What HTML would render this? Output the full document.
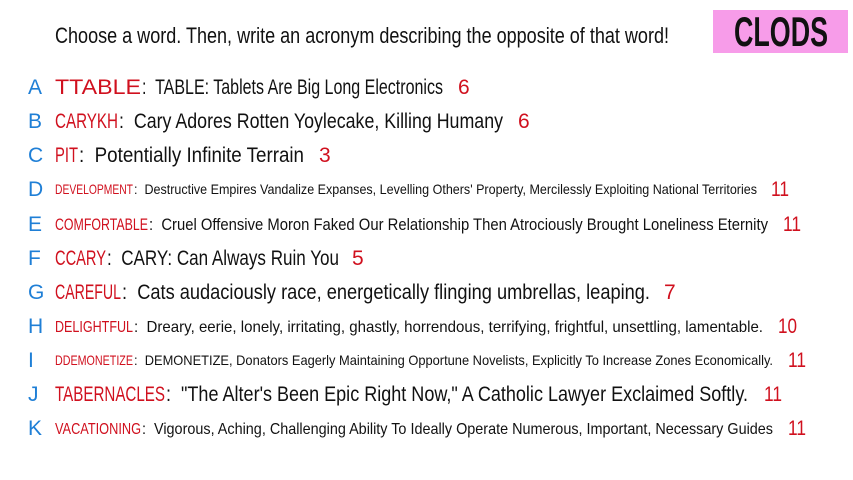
<!DOCTYPE html>
<html><head><meta charset="utf-8"><style>
html,body{margin:0;padding:0;background:#fff;width:853px;height:480px;overflow:hidden}
svg text{font-family:"Liberation Sans",sans-serif;white-space:pre}
.r{fill:#d0101e}.b{fill:#1f7fd6}.k{fill:#111}
</style></head><body>
<svg width="853" height="480" xmlns="http://www.w3.org/2000/svg" xml:space="preserve">
<text class="k" x="55" y="43" font-size="22" textLength="614" lengthAdjust="spacingAndGlyphs">Choose a word. Then, write an acronym describing the opposite of that word!</text>
<rect x="713" y="10" width="135" height="43" fill="#f79ce9"/>
<text class="k" x="734" y="46" font-size="42" font-weight="bold" textLength="94" lengthAdjust="spacingAndGlyphs">CLODS</text>

<g font-size="21">
<text class="b" x="28" y="94">A</text>
<text class="r" x="55" y="94" textLength="86" lengthAdjust="spacingAndGlyphs">TTABLE</text>
<text class="k" x="142" y="94" textLength="301" lengthAdjust="spacingAndGlyphs">:  TABLE: Tablets Are Big Long Electronics</text>
<text class="r" x="458" y="94">6</text>

<text class="b" x="28" y="128">B</text>
<text class="r" x="55" y="128" textLength="63" lengthAdjust="spacingAndGlyphs">CARYKH</text>
<text class="k" x="119" y="128" textLength="384" lengthAdjust="spacingAndGlyphs">:  Cary Adores Rotten Yoylecake, Killing Humany</text>
<text class="r" x="518" y="128">6</text>

<text class="b" x="28" y="162">C</text>
<text class="r" x="55" y="162" textLength="23" lengthAdjust="spacingAndGlyphs">PIT</text>
<text class="k" x="79" y="162" textLength="225" lengthAdjust="spacingAndGlyphs">:  Potentially Infinite Terrain</text>
<text class="r" x="319" y="162">3</text>

<text class="b" x="28" y="196">D</text>
<text class="r" x="55" y="194" font-size="14" textLength="78" lengthAdjust="spacingAndGlyphs">DEVELOPMENT</text>
<text class="k" x="134" y="194" font-size="14" textLength="623" lengthAdjust="spacingAndGlyphs">:  Destructive Empires Vandalize Expanses, Levelling Others' Property, Mercilessly Exploiting National Territories</text>
<text class="r" x="771" y="196" textLength="18" lengthAdjust="spacingAndGlyphs">11</text>

<text class="b" x="28" y="231">E</text>
<text class="r" x="55" y="230" font-size="17" textLength="93" lengthAdjust="spacingAndGlyphs">COMFORTABLE</text>
<text class="k" x="149" y="230" font-size="17" textLength="619" lengthAdjust="spacingAndGlyphs">:  Cruel Offensive Moron Faked Our Relationship Then Atrociously Brought Loneliness Eternity</text>
<text class="r" x="783" y="231" textLength="18" lengthAdjust="spacingAndGlyphs">11</text>

<text class="b" x="28" y="265">F</text>
<text class="r" x="55" y="265" textLength="51" lengthAdjust="spacingAndGlyphs">CCARY</text>
<text class="k" x="107" y="265" textLength="232" lengthAdjust="spacingAndGlyphs">:  CARY: Can Always Ruin You</text>
<text class="r" x="352" y="265">5</text>

<text class="b" x="28" y="299">G</text>
<text class="r" x="55" y="299" textLength="66" lengthAdjust="spacingAndGlyphs">CAREFUL</text>
<text class="k" x="122" y="299" textLength="528" lengthAdjust="spacingAndGlyphs">:  Cats audaciously race, energetically flinging umbrellas, leaping.</text>
<text class="r" x="664" y="299">7</text>

<text class="b" x="28" y="333">H</text>
<text class="r" x="55" y="332" font-size="16" textLength="78" lengthAdjust="spacingAndGlyphs">DELIGHTFUL</text>
<text class="k" x="134" y="332" font-size="16" textLength="629" lengthAdjust="spacingAndGlyphs">:  Dreary, eerie, lonely, irritating, ghastly, horrendous, terrifying, frightful, unsettling, lamentable.</text>
<text class="r" x="778" y="333" textLength="19" lengthAdjust="spacingAndGlyphs">10</text>

<text class="b" x="28" y="367">I</text>
<text class="r" x="55" y="365" font-size="14" textLength="78" lengthAdjust="spacingAndGlyphs">DDEMONETIZE</text>
<text class="k" x="134" y="365" font-size="14" textLength="639" lengthAdjust="spacingAndGlyphs">:  DEMONETIZE, Donators Eagerly Maintaining Opportune Novelists, Explicitly To Increase Zones Economically.</text>
<text class="r" x="788" y="367" textLength="18" lengthAdjust="spacingAndGlyphs">11</text>

<text class="b" x="28" y="401">J</text>
<text class="r" x="55" y="401" textLength="110" lengthAdjust="spacingAndGlyphs">TABERNACLES</text>
<text class="k" x="166" y="401" textLength="582" lengthAdjust="spacingAndGlyphs">:  "The Alter's Been Epic Right Now," A Catholic Lawyer Exclaimed Softly.</text>
<text class="r" x="764" y="401" textLength="18" lengthAdjust="spacingAndGlyphs">11</text>

<text class="b" x="28" y="435">K</text>
<text class="r" x="55" y="434" font-size="16" textLength="86" lengthAdjust="spacingAndGlyphs">VACATIONING</text>
<text class="k" x="142" y="434" font-size="16" textLength="631" lengthAdjust="spacingAndGlyphs">:  Vigorous, Aching, Challenging Ability To Ideally Operate Numerous, Important, Necessary Guides</text>
<text class="r" x="788" y="435" textLength="18" lengthAdjust="spacingAndGlyphs">11</text>
</g>
</svg>
</body></html>
